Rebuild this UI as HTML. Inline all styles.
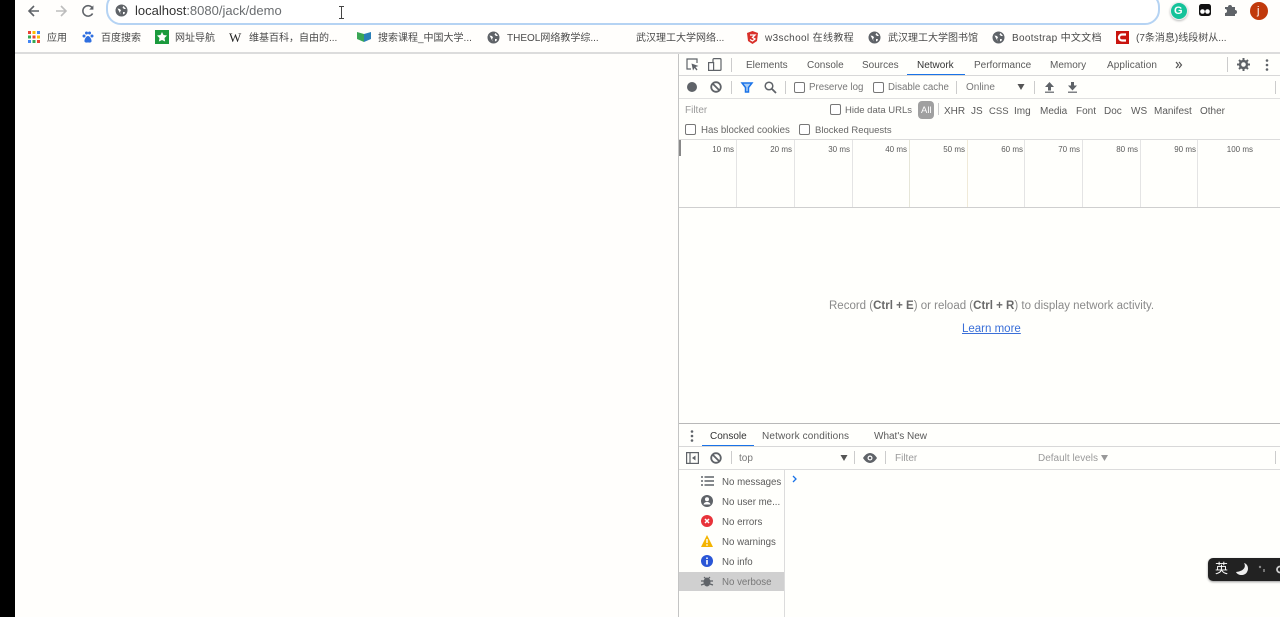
<!DOCTYPE html>
<html><head><meta charset="utf-8">
<style>
html,body{margin:0;padding:0;width:1280px;height:617px;overflow:hidden;background:#fffefc;font-family:"Liberation Sans","Noto Sans CJK SC",sans-serif}
.t{position:absolute;white-space:nowrap;line-height:14px;font-size:10px;color:#5a5a5a}
.b{font-size:10px;color:#4a4a4a;top:32px}
.l{position:absolute;background:#d0d0d0}
.cb{position:absolute;width:9px;height:9px;border:1px solid #777;border-radius:2px;background:#fff}
.s{font-size:9.7px}
.m{font-size:8px}
svg{position:absolute;overflow:visible}
</style></head><body>
<div style="position:absolute;left:0;top:0;width:15px;height:617px;background:#000"></div>

<!-- toolbar -->
<svg style="left:26px;top:3px" width="16" height="16" viewBox="0 0 16 16"><path d="M13 8H3M8 3L3 8l5 5" fill="none" stroke="#5f6368" stroke-width="1.600"/></svg>
<svg style="left:53px;top:3px" width="16" height="16" viewBox="0 0 16 16"><path d="M3 8h10M8 3l5 5-5 5" fill="none" stroke="#bdbdbd" stroke-width="1.600"/></svg>
<svg style="left:80px;top:3px" width="16" height="16" viewBox="0 0 16 16"><path d="M12.600 10.500A5.200 5.200 0 1 1 12.400 5" fill="none" stroke="#5f6368" stroke-width="1.600"/><path d="M13.400 2.400v4.200H9.200z" fill="#5f6368"/></svg>
<div style="position:absolute;left:106px;top:-8px;width:1050px;height:29px;border:2px solid #b5d3f3;border-radius:15px;background:#fff"></div>
<svg style="left:115px;top:4px" width="13" height="13" viewBox="0 0 13 13"><circle cx="6.500" cy="6.500" r="6" fill="#5f6368"/><path d="M2.500 4.500l2.500.5 1 1.500-1 1.500.8 2.500M8.500 2L7.500 3.500 9 5l2 0M8 8l1.800 0 0 1.500L8 10.500z" fill="#fff"/></svg>
<div class="t" style="left:135px;top:3px;font-size:13px;line-height:15px;color:#333">localhost<span style="color:#6a6d70">:8080/jack/demo</span></div>
<svg style="left:338px;top:6px" width="7" height="13" viewBox="0 0 7 13"><path d="M1 .5h5M1 12.500h5M3.500 .5v12" fill="none" stroke="#444" stroke-width="1"/></svg>

<div style="position:absolute;left:1170px;top:2px;width:16px;height:16px;border-radius:50%;background:#15c39a;border:1px solid #eee;box-shadow:0 1px 2px #bbb"></div>
<div class="t" style="left:1174px;top:4px;font-size:11px;font-weight:bold;color:#fff">G</div>
<svg style="left:1198px;top:3px" width="14" height="14" viewBox="0 0 14 14"><rect x="1" y="1" width="12" height="12" rx="2.500" fill="#111"/><circle cx="4.500" cy="8.500" r="2.300" fill="#fff"/><circle cx="9.500" cy="8.500" r="2.300" fill="#fff"/></svg>
<svg style="left:1224px;top:3px" width="14" height="14" viewBox="0 0 14 14"><path d="M1 4h3a2 2 0 0 1 4 0h3v3a2 2 0 0 1 0 4v2H1v-3a2 2 0 0 0 0-4z" fill="#5f6368"/></svg>
<div style="position:absolute;left:1250px;top:2px;width:18px;height:18px;border-radius:50%;background:#c1390b"></div>
<div class="t" style="left:1257px;top:4px;font-size:11px;color:#fff">j</div>

<!-- bookmarks -->
<svg style="left:28px;top:31px" width="12" height="12" viewBox="0 0 12 12"><g><rect x="0" y="0" width="3" height="3" fill="#ea4335"/><rect x="4.500" y="0" width="3" height="3" fill="#fbbc05"/><rect x="9" y="0" width="3" height="3" fill="#4285f4"/><rect x="0" y="4.500" width="3" height="3" fill="#34a853"/><rect x="4.500" y="4.500" width="3" height="3" fill="#ea4335"/><rect x="9" y="4.500" width="3" height="3" fill="#fbbc05"/><rect x="0" y="9" width="3" height="3" fill="#4285f4"/><rect x="4.500" y="9" width="3" height="3" fill="#34a853"/><rect x="9" y="9" width="3" height="3" fill="#ea4335"/></g></svg>
<div class="t b" style="left:47px">应用</div>
<svg style="left:82px;top:31px" width="12" height="13" viewBox="0 0 12 13"><circle cx="2" cy="5" r="1.500" fill="#2f6fe0"/><circle cx="4.500" cy="2" r="1.500" fill="#2f6fe0"/><circle cx="7.500" cy="2" r="1.500" fill="#2f6fe0"/><circle cx="10" cy="5" r="1.500" fill="#2f6fe0"/><path d="M6 5c2 0 4 4 3.500 5.500S7 11.500 6 11.500 3 12 2.500 10.500 4 5 6 5z" fill="#2f6fe0"/></svg>
<div class="t b" style="left:101px">百度搜索</div>
<svg style="left:155px;top:30px" width="14" height="14" viewBox="0 0 14 14"><rect width="14" height="14" fill="#1b9a3d"/><path d="M7 2l1.500 3 3.500.5-2.500 2.500.6 3.500L7 10l-3.100 1.500.6-3.500L2 5.500 5.500 5z" fill="#fff"/></svg>
<div class="t b" style="left:175px">网址导航</div>
<div class="t" style="left:229px;top:31px;font-family:'Liberation Serif',serif;font-size:13px;color:#222">W</div>
<div class="t b" style="left:249px">维基百科，自由的...</div>
<svg style="left:357px;top:31px" width="14" height="12" viewBox="0 0 14 12"><path d="M0 1l7 2v8L0 8z" fill="#3aa655"/><path d="M7 3l7-2v7l-7 3z" fill="#2a7fb8"/></svg>
<div class="t b" style="left:378px">搜索课程_中国大学...</div>
<svg style="left:487px;top:31px" width="13" height="13" viewBox="0 0 13 13"><circle cx="6.500" cy="6.500" r="6" fill="#5f6368"/><path d="M2.500 4.500l2.500.5 1 1.500-1 1.500.8 2.500M8.500 2L7.500 3.500 9 5l2 0M8 8l1.800 0 0 1.500L8 10.500z" fill="#fff"/></svg>
<div class="t b" style="left:507px">THEOL网络教学综...</div>
<div class="t b" style="left:636px">武汉理工大学网络...</div>
<svg style="left:746px;top:31px" width="13" height="13" viewBox="0 0 13 13"><path d="M1 2l5.500-2L12 2l-1 8-4.500 3L2 10z" fill="#d9302a"/><path d="M4 4h5L6.500 6.500 9 8 6.500 10 4 8.500" fill="none" stroke="#fff" stroke-width="1.300"/></svg>
<div class="t b" style="left:765px;letter-spacing:.35px">w3school 在线教程</div>
<svg style="left:868px;top:31px" width="13" height="13" viewBox="0 0 13 13"><circle cx="6.500" cy="6.500" r="6" fill="#5f6368"/><path d="M2.500 4.500l2.500.5 1 1.500-1 1.500.8 2.500M8.500 2L7.500 3.500 9 5l2 0M8 8l1.800 0 0 1.500L8 10.500z" fill="#fff"/></svg>
<div class="t b" style="left:888px">武汉理工大学图书馆</div>
<svg style="left:992px;top:31px" width="13" height="13" viewBox="0 0 13 13"><circle cx="6.500" cy="6.500" r="6" fill="#5f6368"/><path d="M2.500 4.500l2.500.5 1 1.500-1 1.500.8 2.500M8.500 2L7.500 3.500 9 5l2 0M8 8l1.800 0 0 1.500L8 10.500z" fill="#fff"/></svg>
<div class="t b" style="left:1012px;letter-spacing:.3px">Bootstrap 中文文档</div>
<svg style="left:1116px;top:31px" width="13" height="13" viewBox="0 0 13 13"><rect width="13" height="13" fill="#c9140e"/><path d="M10 3.500H6a3 3 0 0 0 0 6h4" fill="none" stroke="#fff" stroke-width="2.200"/></svg>
<div class="t b" style="left:1136px">(7条消息)线段树从...</div>

<div class="l" style="left:15px;top:52px;width:1265px;height:2px;background:#dcdcdc"></div>

<!-- devtools frame -->
<div style="position:absolute;left:679px;top:54px;width:601px;height:563px;background:#fffffc"></div>
<div class="l" style="left:678px;top:54px;width:1px;height:563px;background:#c4c4c4"></div>

<!-- tabs row -->
<svg style="left:686px;top:58px" width="13" height="13" viewBox="0 0 13 13"><path d="M5 11H1V1h10v4" fill="none" stroke="#5f6368" stroke-width="1.200"/><path d="M5.500 5.500l7 2.500-3 1 2 2.500-1 1-2-2.500-1.500 2.500z" fill="#5f6368"/></svg>
<svg style="left:708px;top:58px" width="14" height="13" viewBox="0 0 14 13"><rect x="5" y=".6" width="8" height="11.800" rx="1" fill="none" stroke="#5f6368" stroke-width="1.200"/><rect x=".6" y="4.600" width="5" height="7.800" fill="#fff" stroke="#5f6368" stroke-width="1.200"/></svg>
<div class="l" style="left:731px;top:58px;width:1px;height:14px;background:#ccc"></div>
<div class="t" style="left:746px;top:59px">Elements</div>
<div class="t" style="left:807px;top:59px">Console</div>
<div class="t" style="left:862px;top:59px">Sources</div>
<div class="t" style="left:917px;top:59px;color:#333">Network</div>
<div style="position:absolute;left:907px;top:74px;width:58px;height:2px;background:#1a73e8"></div>
<div class="t" style="left:974px;top:59px">Performance</div>
<div class="t" style="left:1050px;top:59px">Memory</div>
<div class="t" style="left:1107px;top:59px;letter-spacing:.1px">Application</div>
<svg style="left:1175px;top:61px" width="8" height="8" viewBox="0 0 8 8"><path d="M1 1l2.500 3L1 7M4 1l2.500 3L4 7" fill="none" stroke="#555" stroke-width="1.200"/></svg>
<div class="l" style="left:1227px;top:57px;width:1px;height:15px;background:#ccc"></div>
<svg style="left:1237px;top:58px" width="13" height="13" viewBox="0 0 13 13"><circle cx="6.500" cy="6.500" r="3.500" fill="none" stroke="#5f6368" stroke-width="2.400"/><path d="M6.500 0v2.500M6.500 10.500V13M0 6.500h2.500M10.500 6.500H13M2 2l1.500 1.500M9.500 9.500L11 11M11 2L9.500 3.500M3.500 9.500L2 11" stroke="#5f6368" stroke-width="2"/></svg>
<svg style="left:1265px;top:59px" width="4" height="12" viewBox="0 0 4 12"><circle cx="2" cy="1.500" r="1.300" fill="#5f6368"/><circle cx="2" cy="6" r="1.300" fill="#5f6368"/><circle cx="2" cy="10.500" r="1.300" fill="#5f6368"/></svg>
<div class="l" style="left:679px;top:75px;width:601px;height:1px;background:#d8d8d8"></div>

<!-- network toolbar -->
<div style="position:absolute;left:687px;top:82px;width:10px;height:10px;border-radius:50%;background:#5f6368"></div>
<svg style="left:710px;top:81px" width="12" height="12" viewBox="0 0 12 12"><circle cx="6" cy="6" r="4.800" fill="none" stroke="#5f6368" stroke-width="1.800"/><path d="M2.500 2.500l7 7" stroke="#5f6368" stroke-width="1.800"/></svg>
<div class="l" style="left:731px;top:81px;width:1px;height:13px;background:#ccc"></div>
<svg style="left:741px;top:82px" width="12" height="11" viewBox="0 0 12 11"><path d="M1 1h10L7.500 5.500V10h-3V5.500z" fill="#a8cdf5" stroke="#1a73e8" stroke-width="1.500"/></svg>
<svg style="left:764px;top:81px" width="13" height="13" viewBox="0 0 13 13"><circle cx="5" cy="5" r="3.800" fill="none" stroke="#5f6368" stroke-width="1.500"/><path d="M8 8l4 4" stroke="#5f6368" stroke-width="1.800"/></svg>
<div class="l" style="left:785px;top:81px;width:1px;height:13px;background:#ccc"></div>
<div class="cb" style="left:794px;top:82px"></div>
<div class="t s" style="left:809px;top:81px;color:#777">Preserve log</div>
<div class="cb" style="left:873px;top:82px"></div>
<div class="t s" style="left:888px;top:81px;color:#777">Disable cache</div>
<div class="l" style="left:956px;top:81px;width:1px;height:13px;background:#ccc"></div>
<div class="t" style="left:966px;top:81px;color:#777">Online</div>
<svg style="left:1017px;top:84px" width="8" height="6" viewBox="0 0 8 6"><path d="M.5 0h7L4 6z" fill="#555"/></svg>
<div class="l" style="left:1034px;top:81px;width:1px;height:13px;background:#ccc"></div>
<svg style="left:1044px;top:81px" width="11" height="12" viewBox="0 0 11 12"><path d="M5.500 1L10 6H7v3.500H4V6H1z" fill="#5f6368"/><path d="M1 11.200h9" stroke="#5f6368" stroke-width="1.200"/></svg>
<svg style="left:1067px;top:81px" width="11" height="12" viewBox="0 0 11 12"><path d="M5.500 9.500L10 4.500H7V1H4v3.500H1z" fill="#5f6368"/><path d="M1 11.200h9" stroke="#5f6368" stroke-width="1.200"/></svg>
<div class="l" style="left:1275px;top:81px;width:1px;height:13px;background:#ccc"></div>
<div class="l" style="left:679px;top:98px;width:601px;height:1px;background:#e0e0e0"></div>

<!-- filter row -->
<div class="t" style="left:685px;top:104px;color:#9a9a9a">Filter</div>
<div class="cb" style="left:830px;top:104px"></div>
<div class="t" style="left:845px;top:104px;color:#666;font-size:9.500px">Hide data URLs</div>
<div style="position:absolute;left:918px;top:101px;width:16px;height:18px;border-radius:4px;background:#a0a0a0"></div>
<div class="t" style="left:921px;top:104px;color:#fff;font-size:9.500px">All</div>
<div class="l" style="left:938px;top:103px;width:1px;height:12px;background:#ccc"></div>
<div class="t" style="left:944px;top:105px">XHR</div>
<div class="t" style="left:971px;top:105px">JS</div>
<div class="t" style="left:989px;top:105px;font-size:9.500px">CSS</div>
<div class="t" style="left:1014px;top:105px">Img</div>
<div class="t" style="left:1040px;top:105px">Media</div>
<div class="t" style="left:1076px;top:105px">Font</div>
<div class="t" style="left:1104px;top:105px">Doc</div>
<div class="t" style="left:1131px;top:105px">WS</div>
<div class="t" style="left:1154px;top:105px">Manifest</div>
<div class="t" style="left:1200px;top:105px">Other</div>
<div class="cb" style="left:685px;top:124px"></div>
<div class="t s" style="left:701px;top:124px;color:#666">Has blocked cookies</div>
<div class="cb" style="left:799px;top:124px"></div>
<div class="t" style="left:815px;top:124px;color:#666;font-size:9.500px">Blocked Requests</div>
<div class="l" style="left:679px;top:139px;width:601px;height:1px;background:#dcdcdc"></div>

<!-- timeline -->
<div class="l" style="left:679px;top:140px;width:2px;height:16px;background:#888"></div>
<div class="l" style="left:736px;top:140px;width:1px;height:67px;background:#e4e4e4"></div>
<div class="l" style="left:794px;top:140px;width:1px;height:67px;background:#e4e4e4"></div>
<div class="l" style="left:852px;top:140px;width:1px;height:67px;background:#e4e4e4"></div>
<div class="l" style="left:909px;top:140px;width:1px;height:67px;background:#e6e6d8"></div>
<div class="l" style="left:967px;top:140px;width:1px;height:67px;background:#f0ead8"></div>
<div class="l" style="left:1024px;top:140px;width:1px;height:67px;background:#e4e4e4"></div>
<div class="l" style="left:1082px;top:140px;width:1px;height:67px;background:#e4e4e4"></div>
<div class="l" style="left:1140px;top:140px;width:1px;height:67px;background:#e4e4e4"></div>
<div class="l" style="left:1197px;top:140px;width:1px;height:67px;background:#e4e4e4"></div>
<div class="t m" style="right:546px;top:143px">10 ms</div>
<div class="t m" style="right:488px;top:143px">20 ms</div>
<div class="t m" style="right:430px;top:143px">30 ms</div>
<div class="t m" style="right:373px;top:143px">40 ms</div>
<div class="t m" style="right:315px;top:143px">50 ms</div>
<div class="t m" style="right:257px;top:143px">60 ms</div>
<div class="t m" style="right:200px;top:143px">70 ms</div>
<div class="t m" style="right:142px;top:143px">80 ms</div>
<div class="t m" style="right:84px;top:143px">90 ms</div>
<div class="t m" style="right:27px;top:143px">100 ms</div>
<div class="l" style="left:679px;top:207px;width:601px;height:1px;background:#cfcfcf"></div>

<!-- empty state -->
<div class="t" style="left:829px;top:299px;font-size:11.500px;color:#8a8a8a">Record (<b style="color:#6a6a6a">Ctrl + E</b>) or reload (<b style="color:#6a6a6a">Ctrl + R</b>) to display network activity.</div>
<div class="t" style="left:962px;top:322px;font-size:11.500px;color:#3a6fd8;text-decoration:underline">Learn more</div>

<!-- drawer -->
<div class="l" style="left:679px;top:423px;width:601px;height:1px;background:#b8b8b8"></div>
<svg style="left:690px;top:430px" width="4" height="12" viewBox="0 0 4 12"><circle cx="2" cy="1.500" r="1.300" fill="#5f6368"/><circle cx="2" cy="6" r="1.300" fill="#5f6368"/><circle cx="2" cy="10.500" r="1.300" fill="#5f6368"/></svg>
<div class="t" style="left:710px;top:430px;color:#333">Console</div>
<div style="position:absolute;left:702px;top:445px;width:52px;height:2px;background:#1a73e8"></div>
<div class="t" style="left:762px;top:430px;letter-spacing:.15px">Network conditions</div>
<div class="t" style="left:874px;top:430px">What's New</div>
<div class="l" style="left:679px;top:446px;width:601px;height:1px;background:#d8d8d8"></div>

<svg style="left:686px;top:452px" width="13" height="12" viewBox="0 0 13 12"><rect x=".6" y=".6" width="11.800" height="10.800" fill="none" stroke="#5f6368" stroke-width="1.200"/><path d="M4 .6v10.800" stroke="#5f6368" stroke-width="1.200"/><path d="M9.500 3.500v5L6 6z" fill="#5f6368"/></svg>
<svg style="left:710px;top:452px" width="12" height="12" viewBox="0 0 12 12"><circle cx="6" cy="6" r="4.800" fill="none" stroke="#5f6368" stroke-width="1.800"/><path d="M2.500 2.500l7 7" stroke="#5f6368" stroke-width="1.800"/></svg>
<div class="l" style="left:731px;top:451px;width:1px;height:13px;background:#ccc"></div>
<div class="t" style="left:739px;top:452px;color:#777">top</div>
<svg style="left:840px;top:455px" width="8" height="6" viewBox="0 0 8 6"><path d="M.5 0h7L4 6z" fill="#555"/></svg>
<div class="l" style="left:854px;top:451px;width:1px;height:13px;background:#ccc"></div>
<svg style="left:863px;top:453px" width="14" height="10" viewBox="0 0 14 10"><path d="M0 5c2-3.300 4.500-5 7-5s5 1.700 7 5c-2 3.300-4.500 5-7 5S2 8.300 0 5z" fill="#5f6368"/><circle cx="7" cy="5" r="2.500" fill="#fff"/><circle cx="7" cy="5" r="1.300" fill="#5f6368"/></svg>
<div class="l" style="left:885px;top:451px;width:1px;height:13px;background:#ccc"></div>
<div class="t" style="left:895px;top:452px;color:#9a9a9a">Filter</div>
<div class="t" style="left:1038px;top:452px;color:#9a9a9a">Default levels</div>
<svg style="left:1101px;top:455px" width="7" height="6" viewBox="0 0 7 6"><path d="M0 0h7L3.500 6z" fill="#999"/></svg>
<div class="l" style="left:1275px;top:451px;width:1px;height:13px;background:#ccc"></div>
<div class="l" style="left:679px;top:469px;width:601px;height:1px;background:#dcdcdc"></div>

<!-- sidebar -->
<div class="l" style="left:784px;top:470px;width:1px;height:147px;background:#dcdcdc"></div>
<div style="position:absolute;left:679px;top:572px;width:105px;height:19px;background:#d0d0d0"></div>
<svg style="left:701px;top:476px" width="13" height="10" viewBox="0 0 13 10"><path d="M0 1h2M0 5h2M0 9h2M3.500 1H13M3.500 5H13M3.500 9H13" stroke="#5f6368" stroke-width="1.500"/></svg>
<svg style="left:701px;top:495px" width="12" height="12" viewBox="0 0 12 12"><circle cx="6" cy="6" r="6" fill="#5f6368"/><circle cx="6" cy="4.300" r="2" fill="#fff"/><path d="M2.500 9.500c.5-2 2-2.500 3.500-2.500s3 .5 3.500 2.500z" fill="#fff"/></svg>
<svg style="left:701px;top:515px" width="12" height="12" viewBox="0 0 12 12"><circle cx="6" cy="6" r="6" fill="#e8333a"/><path d="M4 4l4 4M8 4l-4 4" stroke="#fff" stroke-width="1.500"/></svg>
<svg style="left:701px;top:535px" width="12" height="12" viewBox="0 0 12 12"><path d="M6 0l6 12H0z" fill="#f4b400"/><path d="M6 4v4M6 9.200v1.500" stroke="#fff" stroke-width="1.400"/></svg>
<svg style="left:701px;top:555px" width="12" height="12" viewBox="0 0 12 12"><circle cx="6" cy="6" r="6" fill="#2a56d6"/><path d="M6 5v4.500M6 2.500v1.500" stroke="#fff" stroke-width="1.600"/></svg>
<svg style="left:701px;top:575px" width="12" height="12" viewBox="0 0 12 12"><ellipse cx="6" cy="7" rx="3.500" ry="4.500" fill="#5f6368"/><path d="M3 2l2 2M9 2L7 4M0 6h3M9 6h3M0 10l3-1M12 10l-3-1" stroke="#5f6368" stroke-width="1.200"/></svg>
<div class="t s" style="left:722px;top:476px">No messages</div>
<div class="t s" style="left:722px;top:496px">No user me...</div>
<div class="t s" style="left:722px;top:516px">No errors</div>
<div class="t s" style="left:722px;top:536px">No warnings</div>
<div class="t s" style="left:722px;top:556px">No info</div>
<div class="t s" style="left:722px;top:576px;color:#777">No verbose</div>
<svg style="left:792px;top:475px" width="6" height="8" viewBox="0 0 6 8"><path d="M1 1l3 3-3 3" fill="none" stroke="#1a73e8" stroke-width="1.300"/></svg>

<!-- IME -->
<div style="position:absolute;left:1208px;top:558px;width:80px;height:23px;border-radius:5px;background:#222;box-shadow:0 1px 2px #999"></div>
<div class="t" style="left:1215px;top:562px;font-size:13px;color:#fff">英</div>
<svg style="left:1236px;top:563px" width="13" height="13" viewBox="0 0 13 13"><path d="M8 0c2 3 1 8-8 9 2 4 9 4 11 0 2-3 1-8-3-9z" fill="#eee"/></svg>
<svg style="left:1258px;top:565px" width="9" height="9" viewBox="0 0 9 9"><circle cx="2" cy="2" r="1.200" fill="#888"/><path d="M6 4v3" stroke="#aaa" stroke-width="1.200"/></svg>
<svg style="left:1275px;top:564px" width="10" height="11" viewBox="0 0 10 11"><circle cx="5" cy="5.500" r="3" fill="none" stroke="#ccc" stroke-width="1.800"/></svg>
</body></html>
